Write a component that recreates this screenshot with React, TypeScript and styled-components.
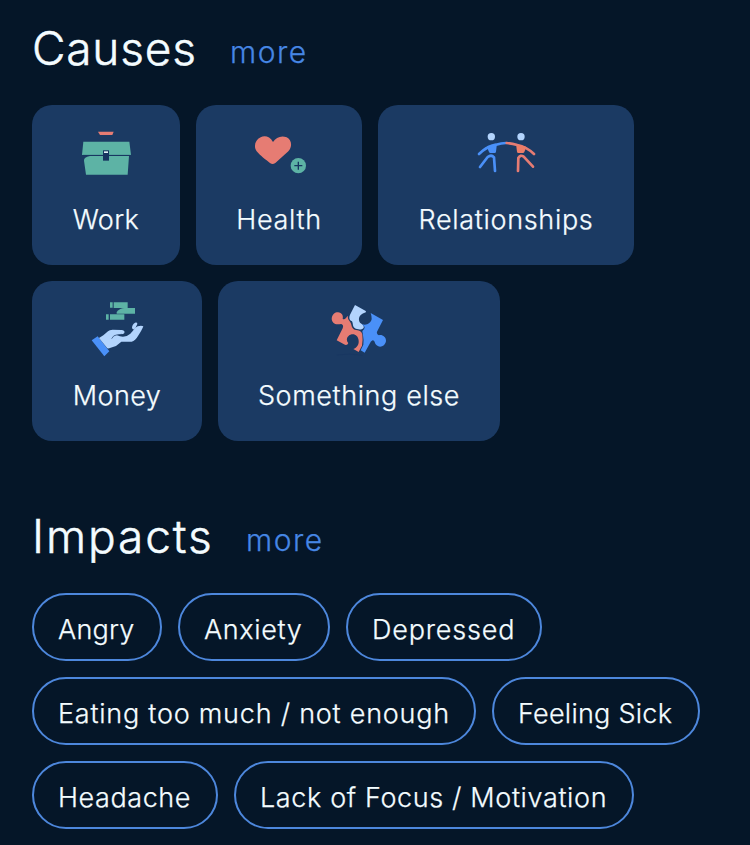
import React from "react";
import styled, { createGlobalStyle } from "styled-components";

const GlobalStyle = createGlobalStyle`
  * { box-sizing: border-box; }
  body { margin: 0; background: #051628; }
`;

const Page = styled.main`
  width: 750px;
  height: 845px;
  overflow: hidden;
  padding: 0 32px;
  background: #051628;
  color: #f4fcff;
  font-family: Inter, "Open Sans", sans-serif;
  font-weight: 300;
  -webkit-text-stroke: 0.25px currentColor;
`;

const Section = styled.section<{ $top: number }>`
  padding-top: ${(p) => p.$top}px;
`;

const Heading = styled.header`
  display: flex;
  gap: 32px;
  height: 57px;
  line-height: 57px;
  margin-bottom: 28px;
  white-space: nowrap;
`;

const Title = styled.h2<{ $tracking: number; $width: number }>`
  margin: 0;
  width: ${(p) => p.$width}px;
  font-size: 46px;
  font-weight: 300;
  -webkit-text-stroke: 0.5px currentColor;
  letter-spacing: ${(p) => p.$tracking}px;
`;

const More = styled.a`
  padding-top: 4px;
  color: #4686e4;
  font-size: 30px;
  letter-spacing: 1.5px;
`;

const Cards = styled.div`
  display: flex;
  flex-wrap: wrap;
  gap: 16px;
`;

const Card = styled.div<{ $width: number }>`
  display: flex;
  flex-direction: column;
  align-items: center;
  width: ${(p) => p.$width}px;
  height: 160px;
  padding-top: 16px;
  border-radius: 20px;
  background: #1b3a63;
`;

const Icon = styled.svg`
  display: block;
  width: 72px;
  height: 72px;
`;

const Label = styled.span<{ $tracking: number }>`
  font-size: 27px;
  line-height: 34px;
  margin-top: 10px;
  white-space: nowrap;
  letter-spacing: ${(p) => p.$tracking}px;
`;

const Chips = styled(Cards)``;

const Chip = styled.div<{ $width: number; $tracking: number }>`
  width: ${(p) => p.$width}px;
  height: 68px;
  padding: 3px 0 0 24px;
  border: 2px solid #4d87dc;
  border-radius: 34px;
  font-size: 27px;
  line-height: 64px;
  white-space: nowrap;
  letter-spacing: ${(p) => p.$tracking}px;
`;

const GREEN = "#5db3a5";
const CORAL = "#e67c73";
const BLUE = "#4a90f8";
const PALE = "#b3d4fd";
const NAVY = "#173560";

const WorkIcon = () => (
  <Icon viewBox="0 3 216 216">
    <path d="M84 35H131L127 45H90Z" fill={CORAL} />
    <path d="M40 65H178L183 105H36Z" fill={GREEN} />
    <path d="M46 108H177L173 164H48L42 122Q41 112 60 108Z" fill={GREEN} />
    <path d="M38 106H182" stroke={NAVY} strokeWidth="2" />
    <rect x="99" y="91" width="18" height="31" fill={NAVY} />
    <rect x="102" y="94" width="12" height="5" fill="#e5f4f7" />
  </Icon>
);

const HealthIcon = () => (
  <Icon viewBox="-3 -9 216 216">
    <path d="M87 54C77 36 61 34 50 40C33 48 28 68 38 82C48 95 67 108 79 118Q86 123 94 117L133 82C146 68 143 47 128 40C112 33 96 40 87 54Z" fill={CORAL} />
    <circle cx="163" cy="125" r="23" fill={GREEN} />
    <path d="M163 113V137M151 125H175" stroke={NAVY} strokeWidth="4" />
  </Icon>
);

const RelationshipsIcon = () => (
  <Icon viewBox="0 -9 216 216">
    <circle cx="64" cy="38" r="11" fill={PALE} />
    <circle cx="153" cy="38" r="11" fill={PALE} />
    <g fill="none" stroke={BLUE} strokeWidth="8" strokeLinecap="round" strokeLinejoin="round">
      <path d="M27 90Q51 67 78 62Q94 57 108 57" />
      <path d="M30 129L53 99Q64 91 72 100L75 141" />
      <path d="M55 69L76 66L74 83L61 83Z" fill={BLUE} />
    </g>
    <g fill="none" stroke={CORAL} strokeWidth="8" strokeLinecap="round" strokeLinejoin="round">
      <path d="M110 57Q126 58 142 63Q169 68 192 90" />
      <path d="M144 141L145 102Q151 91 161 98L189 128" />
      <path d="M143 67L164 71L159 83L145 83Z" fill="#ec7d68" stroke="#ec7d68" />
    </g>
  </Icon>
);

const MoneyIcon = () => (
  <Icon viewBox="-9 9 216 216">
    <path d="M78 25H86V41H78ZM89 25H131V42H89ZM66 61H74V77H66ZM78 61H121V77H78Z" fill={GREEN} />
    <path d="M98 54Q108 42 121 42H153V59H98Z" fill={GREEN} />
    <path d="M23 139L41 127L76 172L61 187Z" fill={BLUE} />
    <path d="M45 132L58 124L72 112Q76 107 86 107L112 108Q124 109 121 117Q118 122 98 123Q121 135 139 119Q147 110 154 101L161 97Q172 94 178 97Q174 108 162 126Q154 140 143 143L112 143L96 156L80 161Q74 164 70 163Z" fill={PALE} />
    <path d="M144 102Q144 91 153 86Q161 85 160 90L154 103Q147 110 144 102Z" fill={PALE} />
    <path d="M83 134Q87 123 101 122L114 121" fill="none" stroke={NAVY} strokeWidth="2" />
  </Icon>
);

const PuzzleIcon = () => (
  <Icon viewBox="-3 -3 216 216">
    <path d="M93 21L124 38Q130 42 120 45C106 50 101 63 108 74C116 79 121 84 119 89C116 96 101 96 92 90C85 85 88 77 84 70C75 66 75 58 78 50Z" fill={PALE} />
    <path d="M140 45L177 66L159 101Q157 108 165 112C174 109 187 117 186 129C184 144 168 151 158 142C151 136 153 127 146 127Q140 130 137 137L122 164L110 157L118 140Q120 127 117 112L115 99Q122 95 122 87L114 78C126 84 141 75 143 63Q143 54 140 45Z" fill={BLUE} />
    <path d="M71 53Q70 64 79 73C84 81 81 90 92 95C104 98 113 96 115 110Q117 127 114 143L104 162L88 153C99 148 105 140 104 128C103 114 93 107 83 109C72 112 66 121 70 131Q75 135 71 139Q66 143 60 139L38 127L56 91Q60 81 52 78C44 78 36 82 28 74C18 64 25 45 38 43C53 40 59 54 56 62Q60 67 66 60Z" fill={CORAL} />
    <path d="M38 171Q75 165 116 172" fill="none" stroke={NAVY} strokeWidth="2" />
  </Icon>
);

const causes = [
  { text: "Work", width: 148, tracking: 0.4, icon: WorkIcon },
  { text: "Health", width: 166, tracking: 0.65, icon: HealthIcon },
  { text: "Relationships", width: 256, tracking: 0.68, icon: RelationshipsIcon },
  { text: "Money", width: 170, tracking: 0.45, icon: MoneyIcon },
  { text: "Something else", width: 282, tracking: 0.6, icon: PuzzleIcon },
];

const impacts = [
  { text: "Angry", width: 130, tracking: 0.2 },
  { text: "Anxiety", width: 152, tracking: 0.65 },
  { text: "Depressed", width: 196, tracking: 0.8 },
  { text: "Eating too much / not enough", width: 444, tracking: 0.76 },
  { text: "Feeling Sick", width: 208, tracking: 0.25 },
  { text: "Headache", width: 186, tracking: 0.57 },
  { text: "Lack of Focus / Motivation", width: 400, tracking: 0.63 },
];

export default function App() {
  return (
    <>
      <GlobalStyle />
      <Page>
        <Section $top={20}>
          <Heading>
            <Title $tracking={0.8} $width={166}>Causes</Title>
            <More>more</More>
          </Heading>
          <Cards>
            {causes.map(({ text, width, tracking, icon: Glyph }) => (
              <Card key={text} $width={width}>
                <Glyph />
                <Label $tracking={tracking}>{text}</Label>
              </Card>
            ))}
          </Cards>
        </Section>
        <Section $top={67}>
          <Heading>
            <Title $tracking={1.9} $width={182}>Impacts</Title>
            <More>more</More>
          </Heading>
          <Chips>
            {impacts.map(({ text, width, tracking }) => (
              <Chip key={text} $width={width} $tracking={tracking}>{text}</Chip>
            ))}
          </Chips>
        </Section>
      </Page>
    </>
  );
}
